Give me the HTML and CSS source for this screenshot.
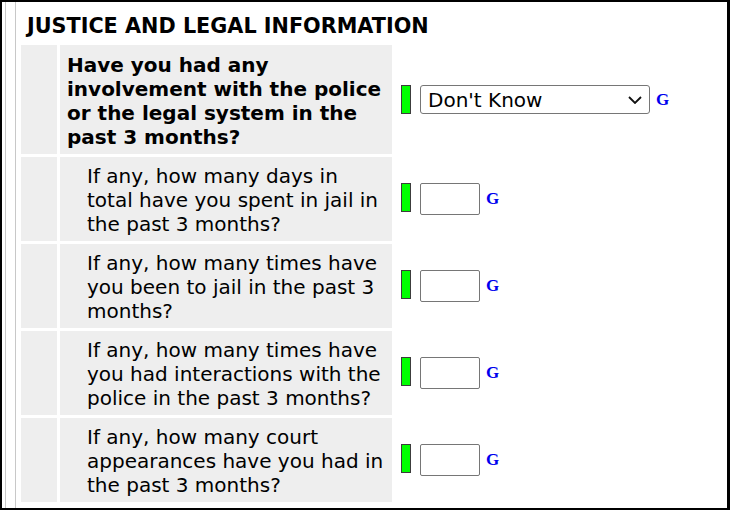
FILE: index.html
```html
<!DOCTYPE html>
<html>
<head>
<meta charset="utf-8">
<link rel="stylesheet" href="styles.css">
</head>
<body>
<div class="page">
  <div class="frame">
    <div class="inner">
      <div class="form">
        <div class="section-title">JUSTICE AND LEGAL INFORMATION</div>

        <div class="num"></div>
        <div class="question main">Have you had any<br>involvement with the police<br>or the legal system in the<br>past 3 months?</div>
        <div class="answer">
          <span class="flag"></span>
          <select class="choice">
            <option>Don't Know</option>
          </select>
          <span class="g">G</span>
        </div>

        <div class="num"></div>
        <div class="question sub">If any, how many days in<br>total have you spent in jail in<br>the past 3 months?</div>
        <div class="answer text">
          <span class="flag"></span>
          <input class="box" type="text">
          <span class="g">G</span>
        </div>

        <div class="num"></div>
        <div class="question sub">If any, how many times have<br>you been to jail in the past 3<br>months?</div>
        <div class="answer text">
          <span class="flag"></span>
          <input class="box" type="text">
          <span class="g">G</span>
        </div>

        <div class="num"></div>
        <div class="question sub">If any, how many times have<br>you had interactions with the<br>police in the past 3 months?</div>
        <div class="answer text">
          <span class="flag"></span>
          <input class="box" type="text">
          <span class="g">G</span>
        </div>

        <div class="num"></div>
        <div class="question sub">If any, how many court<br>appearances have you had in<br>the past 3 months?</div>
        <div class="answer text">
          <span class="flag"></span>
          <input class="box" type="text">
          <span class="g">G</span>
        </div>
      </div>
    </div>
  </div>
</div>
</body>
</html>
```

FILE: styles.css
```css
html, body {
  margin: 0;
  padding: 0;
  background: #ffffff;
}

.page {
  box-sizing: border-box;
  width: 730px;
  height: 510px;
  border-top: 2px solid #000;
  border-left: 2px solid #000;
  border-bottom: 2px solid #000;
  border-right: 3px solid #000;
  overflow: hidden;
  font-family: "DejaVu Sans", Verdana, sans-serif;
  font-size: 20px;
  line-height: 24px;
  color: #000;
}

.frame {
  height: 100%;
  margin-left: 3px;
  border-left: 1px solid #c8c8c8;
}

.inner {
  height: 100%;
  margin-left: 9px;
  border-left: 1px solid #c8c8c8;
}

.form {
  display: grid;
  grid-template-columns: 36px 332px 1fr;
  gap: 3px;
  padding: 3px 3px 0 5px;
}

.section-title {
  grid-column: 1 / -1;
  font-weight: bold;
  font-size: 20.75px;
  padding: 9px 6px 4px 6px;
}

.num {
  background: #eeeeee;
}

.question {
  background: #eeeeee;
  white-space: nowrap;
}

.question.main {
  font-weight: bold;
  padding: 8px 7px 5px 7px;
}

.question.sub {
  padding: 7px 7px 5px 27px;
}

.answer {
  display: flex;
  align-items: center;
  padding-left: 6px;
}

.flag {
  box-sizing: border-box;
  width: 10px;
  height: 29px;
  background: #00ff00;
  border: 1px solid #3c3c3c;
  margin-right: 9px;
  flex: none;
}

.answer.text .flag {
  margin-bottom: 3px;
}

.choice {
  box-sizing: border-box;
  -webkit-appearance: none;
  appearance: none;
  width: 230px;
  height: 29px;
  font-family: "DejaVu Sans", Verdana, sans-serif;
  font-size: 20px;
  padding: 0 0 0 7px;
  border: 1px solid #767676;
  border-radius: 3px;
  background-color: #fff;
  background-image: url("data:image/svg+xml,%3Csvg xmlns='http://www.w3.org/2000/svg' width='14' height='8' viewBox='0 0 14 8'%3E%3Cpath d='M1 1 L7 7 L13 1' fill='none' stroke='%23111' stroke-width='1.8'/%3E%3C/svg%3E");
  background-repeat: no-repeat;
  background-position: right 7px center;
  color: #000;
  margin: 0 6px 0 0;
}

.box {
  box-sizing: border-box;
  width: 60px;
  height: 32px;
  border: 1px solid #767676;
  border-radius: 2px;
  background: #fff;
  margin: 0 6px 0 0;
  padding: 0;
}

.g {
  font-family: "Liberation Serif", "Times New Roman", serif;
  font-weight: bold;
  font-size: 17px;
  color: #0000ee;
}
```
